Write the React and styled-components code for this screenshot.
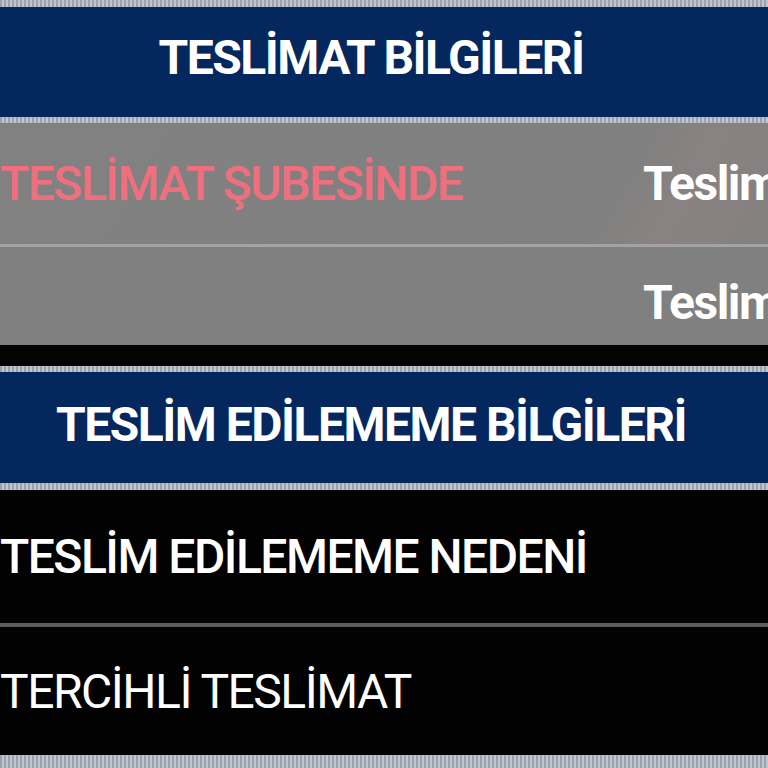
import styled, { createGlobalStyle } from "styled-components";

const GlobalStyle = createGlobalStyle`
  html, body {
    margin: 0;
    padding: 0;
    background: #000;
    font-family: Roboto, "Noto Sans", "Liberation Sans", sans-serif;
  }
`;

const Screen = styled.div`
  width: 768px;
  height: 768px;
  overflow: hidden;
  display: flex;
  flex-direction: column;
  background: #000;
`;

const Rule = styled.div`
  height: ${(p) => p.size}px;
  flex-shrink: 0;
  background: ${(p) =>
    p.tone === "dark"
      ? "#5c5c5c"
      : p.tone === "light"
      ? "#a3a3a3"
      : "repeating-linear-gradient(90deg, #9aa3ad 0 2px, #c2c6cc 2px 4px)"};
`;

const Banner = styled.div`
  height: ${(p) => p.h}px;
  flex-shrink: 0;
  box-sizing: border-box;
  background: #04275e;
  display: flex;
  align-items: center;
  justify-content: center;
  padding-right: 26px;
  padding-bottom: ${(p) => p.lift || 0}px;
`;

const BannerTitle = styled.h2`
  margin: 0;
  color: #ffffff;
  font-size: 48px;
  font-weight: 700;
  letter-spacing: -1.5px;
  white-space: nowrap;
`;

const InfoRow = styled.div`
  height: ${(p) => p.h}px;
  flex-shrink: 0;
  display: grid;
  grid-template-columns: 643px 1fr;
  align-items: center;
  padding-top: ${(p) => p.shift || 0}px;
  box-sizing: border-box;
  overflow: hidden;
  background: ${(p) =>
    p.shade
      ? "linear-gradient(120deg, #818181 0%, #808080 78%, #8a8282 86%, #848080 100%)"
      : "#808080"};
`;

const Label = styled.span`
  color: ${(p) => p.color || "#ffffff"};
  font-size: 48px;
  font-weight: ${(p) => p.weight || 500};
  letter-spacing: -1.5px;
  white-space: nowrap;
`;

const Value = styled.span`
  color: #ffffff;
  font-size: 48px;
  font-weight: 700;
  letter-spacing: -1.5px;
  white-space: nowrap;
  overflow: hidden;
`;

const Gap = styled.div`
  height: 21px;
  flex-shrink: 0;
  background: #030303;
`;

const DarkRow = styled.div`
  height: ${(p) => p.h}px;
  flex-shrink: 0;
  display: flex;
  align-items: center;
  background: #020202;
`;

export default function App() {
  return (
    <Screen>
      <GlobalStyle />
      <Rule size={7} />
      <Banner h={110} lift={9}>
        <BannerTitle>TESLİMAT BİLGİLERİ</BannerTitle>
      </Banner>
      <Rule size={6} />
      <InfoRow h={121} shade>
        <Label color="#ef6f7f">TESLİMAT ŞUBESİNDE</Label>
        <Value>Teslimat Şubesi</Value>
      </InfoRow>
      <Rule size={3} tone="light" />
      <InfoRow h={98} shift={12}>
        <span />
        <Value>Teslimat Tarihi</Value>
      </InfoRow>
      <Gap />
      <Rule size={6} />
      <Banner h={111} lift={6}>
        <BannerTitle>TESLİM EDİLEMEME BİLGİLERİ</BannerTitle>
      </Banner>
      <Rule size={7} />
      <DarkRow h={133}>
        <Label>TESLİM EDİLEMEME NEDENİ</Label>
      </DarkRow>
      <Rule size={4} tone="dark" />
      <DarkRow h={128}>
        <Label weight={400}>TERCİHLİ TESLİMAT</Label>
      </DarkRow>
      <Rule size={13} />
    </Screen>
  );
}
